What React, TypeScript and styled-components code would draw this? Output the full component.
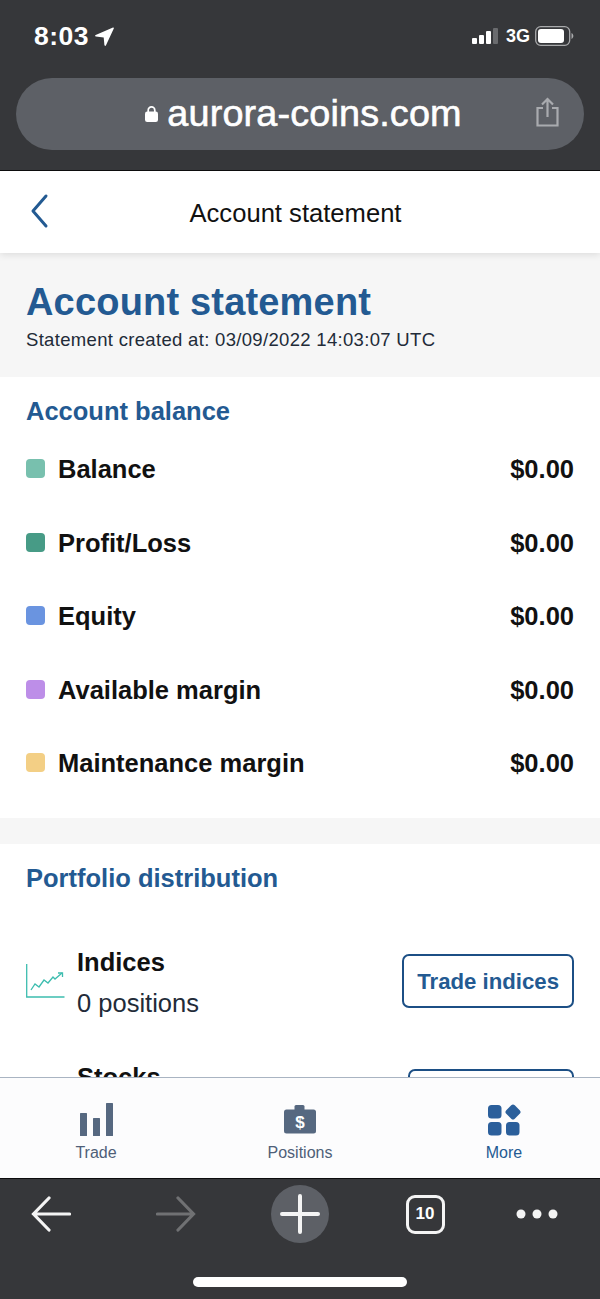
import React from "react";
import styled, { createGlobalStyle } from "styled-components";

const GlobalStyle = createGlobalStyle`
  html, body {
    margin: 0;
    padding: 0;
    background: #36373a;
  }
  * {
    box-sizing: border-box;
  }
`;

const Screen = styled.div`
  width: 600px;
  height: 1299px;
  display: flex;
  flex-direction: column;
  overflow: hidden;
  font-family: "Liberation Sans", Arial, sans-serif;
  background: #fff;
`;

const BrowserTop = styled.header`
  height: 171px;
  flex: none;
  background: #36373a;
  border-bottom: 1px solid #0c0c0d;
  padding: 22px 16px 0;
  color: #fff;
`;

const StatusBar = styled.div`
  height: 28px;
  display: flex;
  align-items: center;
  justify-content: space-between;
  padding: 0 9px 0 18px;
  margin-bottom: 28px;
`;

const StatusGroup = styled.div<{ $gap: number }>`
  display: flex;
  align-items: center;
  gap: ${(p) => p.$gap}px;
`;

const Clock = styled.span`
  font-size: 26.5px;
  font-weight: 700;
  letter-spacing: 0.5px;
`;

const Network = styled.span`
  font-size: 18px;
  font-weight: 700;
  margin: 0 -1px 0 1px;
`;

const UrlBar = styled.div`
  height: 72px;
  border-radius: 36px;
  background: #5d6066;
  display: flex;
  align-items: center;
  justify-content: center;
  position: relative;
  gap: 9px;
  padding-left: 7px;
`;

const UrlText = styled.span`
  font-size: 37.8px;
  line-height: 1;
  color: #fff;
  letter-spacing: 0.15px;
  -webkit-text-stroke: 0.6px #fff;
`;

const ShareButton = styled.span`
  position: absolute;
  right: 25px;
  top: 19px;
  display: flex;
`;

const Content = styled.main`
  flex: 1;
  min-height: 0;
  overflow: hidden;
  display: flex;
  flex-direction: column;
  background: #f6f6f6;
`;

const NavBar = styled.div`
  height: 82px;
  flex: none;
  display: flex;
  align-items: center;
  justify-content: center;
  position: relative;
  background: #fff;
  box-shadow: 0 2px 7px rgba(0, 0, 0, 0.1);
  font-size: 25.6px;
  color: #111;
`;

const NavTitle = styled.span`
  margin: 2px 0 0 -9px;
`;

const BackButton = styled.span`
  position: absolute;
  left: 29px;
  top: 22px;
  display: flex;
`;

const Hero = styled.section`
  height: 124px;
  flex: none;
  padding: 27px 26px 0;
`;

const Heading = styled.h1`
  margin: 0;
  font-size: 38px;
  line-height: 44px;
  font-weight: 700;
  letter-spacing: 0.18px;
  color: #235a92;
`;

const Created = styled.p`
  margin: 5px 0 0;
  font-size: 18.5px;
  line-height: 22px;
  color: #222b38;
  letter-spacing: 0.32px;
`;

const Panel = styled.section<{ $height: number }>`
  height: ${(p) => p.$height}px;
  flex: none;
  padding: 19px 26px 0;
  background: #fff;
`;

const PanelTitle = styled.h2`
  margin: 0;
  font-size: 25.5px;
  line-height: 30px;
  font-weight: 700;
  color: #235a92;
`;

const Gap = styled.div`
  height: 26px;
  flex: none;
`;

const BalanceList = styled.div`
  margin-top: 7px;
  display: flex;
  flex-direction: column;
`;

const BalanceRow = styled.div`
  height: 73.5px;
  display: flex;
  align-items: center;
  font-size: 25.5px;
  font-weight: 700;
  color: #111;
`;

const Swatch = styled.span<{ $color: string }>`
  width: 19px;
  height: 19px;
  border-radius: 4px;
  background: ${(p) => p.$color};
  margin: -2px 13px 0 0;
  flex: none;
`;

const Amount = styled.span`
  margin-left: auto;
`;

const MarketList = styled.div`
  margin-top: 30px;
  display: flex;
  flex-direction: column;
`;

const Market = styled.div`
  display: flex;
  align-items: center;
  justify-content: space-between;
  height: 115px;
`;

const MarketIcon = styled.span`
  width: 51px;
  flex: none;
  display: flex;
`;

const MarketText = styled.div`
  flex: 1;
  padding-top: 4px;
`;

const MarketName = styled.div`
  font-size: 25.5px;
  line-height: 30px;
  font-weight: 700;
  color: #111;
`;

const MarketCount = styled.div`
  margin-top: 11px;
  font-size: 25.5px;
  line-height: 30px;
  color: #222b38;
`;

const TradeButton = styled.button`
  height: 54px;
  border: 2px solid #1c4f85;
  border-radius: 7px;
  background: #fff;
  color: #235a92;
  font-family: inherit;
  font-size: 22.2px;
  font-weight: 700;
  padding: 3px 13px 0;
`;

const TabBar = styled.nav`
  height: 102px;
  flex: none;
  display: grid;
  grid-template-columns: 192px 216px 192px;
  background: #fcfcfd;
  border-top: 1px solid #a9b4c2;
  border-bottom: 1px solid #0c0c0d;
  padding-top: 25px;
`;

const Tab = styled.div<{ $active?: boolean }>`
  display: flex;
  flex-direction: column;
  align-items: center;
  font-size: 16px;
  color: ${(p) => (p.$active ? "#235a92" : "#4f5f78")};
`;

const TabIcon = styled.span`
  height: 33px;
  display: flex;
  align-items: flex-end;
  margin-bottom: 8px;
`;

const BrowserBottom = styled.footer`
  flex: none;
  height: 120px;
  background: #36373a;
  display: flex;
  flex-direction: column;
  align-items: center;
`;

const BrowserActions = styled.div`
  width: 100%;
  height: 98px;
  display: grid;
  grid-template-columns: 125px 124px 125px 112px 58px;
  padding: 6px 0 0 22px;
`;

const BrowserAction = styled.span`
  width: 58px;
  height: 58px;
  display: flex;
  align-items: center;
  justify-content: center;
`;

const NewTab = styled(BrowserAction)`
  border-radius: 50%;
  background: #5d6066;
`;

const TabCount = styled.span`
  width: 39px;
  height: 39px;
  border: 3.5px solid #f4f4f4;
  border-radius: 9px;
  display: flex;
  align-items: center;
  justify-content: center;
  color: #fff;
  font-size: 17px;
  font-weight: 700;
`;

const HomeBar = styled.span`
  width: 214px;
  height: 10px;
  border-radius: 5px;
  background: #fff;
`;

const balances = [
  { label: "Balance", color: "#78c0ae" },
  { label: "Profit/Loss", color: "#479b86" },
  { label: "Equity", color: "#6a94e0" },
  { label: "Available margin", color: "#bd8ee8" },
  { label: "Maintenance margin", color: "#f3cf85" },
];

const markets = [
  { name: "Indices", action: "Trade indices" },
  { name: "Stocks", action: "Trade stocks" },
];

function ChartIcon() {
  return (
    <svg width="39" height="34" viewBox="0 0 39 34" fill="none" stroke="#3dbdaf" strokeWidth="1.3">
      <path d="M0.7 0V33H38.5" />
      <path d="M5 26L9 20L13 23L18 16L22 19L27 13L29 15L36 9" />
      <path d="M32 9H36.5V13" />
    </svg>
  );
}

export default function App() {
  return (
    <Screen>
      <GlobalStyle />
      <BrowserTop>
        <StatusBar>
          <StatusGroup $gap={6}>
            <Clock>8:03</Clock>
            <svg width="19" height="19" viewBox="0 0 19 19" fill="#fff">
              <path d="M18 0.5C18.7 0.3 19 0.8 18.8 1.5L11 18.3C10.6 19.2 9.5 19 9.4 18.1L8.7 10.4L0.9 9.6C0 9.5 -0.2 8.4 0.7 8Z" />
            </svg>
          </StatusGroup>
          <StatusGroup $gap={6}>
            <svg width="27" height="16" viewBox="0 0 27 16">
              <rect x="0" y="10" width="5" height="6" rx="1" fill="#fff" />
              <rect x="7" y="7" width="5" height="9" rx="1" fill="#fff" />
              <rect x="14" y="3" width="5" height="13" rx="1" fill="#fff" />
              <rect x="21" y="0" width="5" height="16" rx="1" fill="#6a6b6e" />
            </svg>
            <Network>3G</Network>
            <svg width="40" height="20" viewBox="0 0 40 20" fill="none">
              <rect x="0.7" y="0.7" width="34" height="18.6" rx="5" stroke="#a9aaac" strokeWidth="1.3" />
              <rect x="3" y="3" width="26" height="14" rx="3" fill="#fff" />
              <path d="M36.5 7v6c1-.4 1.8-1.6 1.8-3s-.8-2.6-1.8-3z" fill="#a9aaac" />
            </svg>
          </StatusGroup>
        </StatusBar>
        <UrlBar>
          <svg width="13" height="16" viewBox="0 0 13 16" fill="#fff">
            <rect x="0" y="5.5" width="13" height="10.5" rx="2.2" />
            <path d="M3.2 7V4.2a3.3 3.3 0 0 1 6.6 0V7" fill="none" stroke="#fff" strokeWidth="1.7" />
          </svg>
          <UrlText>aurora-coins.com</UrlText>
          <ShareButton>
            <svg width="23" height="30" viewBox="0 0 23 30" fill="none" stroke="#a9abaf" strokeWidth="2.2">
              <path d="M7 11H1.5V28.5H21.5V11H16" />
              <path d="M11.5 20V2M6 7.5L11.5 2L17 7.5" />
            </svg>
          </ShareButton>
        </UrlBar>
      </BrowserTop>

      <Content>
        <NavBar>
          <BackButton>
            <svg width="20" height="36" viewBox="0 0 20 36" fill="none" stroke="#235a92" strokeWidth="3" strokeLinecap="round" strokeLinejoin="round">
              <path d="M17 3L4 18L17 33" />
            </svg>
          </BackButton>
          <NavTitle>Account statement</NavTitle>
        </NavBar>

        <Hero>
          <Heading>Account statement</Heading>
          <Created>Statement created at: 03/09/2022 14:03:07 UTC</Created>
        </Hero>

        <Panel $height={441}>
          <PanelTitle>Account balance</PanelTitle>
          <BalanceList>
            {balances.map((b) => (
              <BalanceRow key={b.label}>
                <Swatch $color={b.color} />
                {b.label}
                <Amount>$0.00</Amount>
              </BalanceRow>
            ))}
          </BalanceList>
        </Panel>

        <Gap />

        <Panel $height={300}>
          <PanelTitle>Portfolio distribution</PanelTitle>
          <MarketList>
            {markets.map((m) => (
              <Market key={m.name}>
                <MarketIcon>
                  <ChartIcon />
                </MarketIcon>
                <MarketText>
                  <MarketName>{m.name}</MarketName>
                  <MarketCount>0 positions</MarketCount>
                </MarketText>
                <TradeButton>{m.action}</TradeButton>
              </Market>
            ))}
          </MarketList>
        </Panel>
      </Content>

      <TabBar>
        <Tab>
          <TabIcon>
            <svg width="33" height="33" viewBox="0 0 33 33" fill="#566880">
              <rect x="0" y="10" width="7" height="23" rx="0.5" />
              <rect x="13" y="15" width="7" height="18" rx="0.5" />
              <rect x="26" y="0" width="7" height="33" rx="0.5" />
            </svg>
          </TabIcon>
          Trade
        </Tab>
        <Tab>
          <TabIcon>
            <svg width="32" height="31" viewBox="0 0 32 31">
              <rect x="10.5" y="0" width="10" height="6" rx="1.5" fill="#566880" />
              <rect x="0" y="4.5" width="32" height="24" rx="2.5" fill="#566880" />
              <text x="16" y="23" textAnchor="middle" fontFamily="Liberation Sans" fontSize="17" fontWeight="700" fill="#fff">$</text>
            </svg>
          </TabIcon>
          Positions
        </Tab>
        <Tab $active>
          <TabIcon>
            <svg width="33" height="32" viewBox="0 0 33 32" fill="#2b5f9b">
              <rect x="0" y="1" width="13.5" height="13.5" rx="3.5" />
              <rect x="19" y="2" width="12" height="12" rx="2.5" transform="rotate(45 25 8)" />
              <rect x="0" y="18" width="13.5" height="13.5" rx="3.5" />
              <rect x="18" y="18" width="13.5" height="13.5" rx="3.5" />
            </svg>
          </TabIcon>
          More
        </Tab>
      </TabBar>

      <BrowserBottom>
        <BrowserActions>
          <BrowserAction>
            <svg width="40" height="36" viewBox="0 0 40 36" fill="none" stroke="#f4f4f4" strokeWidth="3.2" strokeLinecap="round">
              <path d="M38.5 18H2.5M18 2L2.5 18L18 34" />
            </svg>
          </BrowserAction>
          <BrowserAction>
            <svg width="40" height="36" viewBox="0 0 40 36" fill="none" stroke="#707173" strokeWidth="3.2" strokeLinecap="round">
              <path d="M1.5 18H37.5M22 2L37.5 18L22 34" />
            </svg>
          </BrowserAction>
          <NewTab>
            <svg width="40" height="40" viewBox="0 0 40 40" fill="none" stroke="#f4f4f4" strokeWidth="4" strokeLinecap="round">
              <path d="M20 2V38M2 20H38" />
            </svg>
          </NewTab>
          <BrowserAction>
            <TabCount>10</TabCount>
          </BrowserAction>
          <BrowserAction>
            <svg width="42" height="10" viewBox="0 0 42 10" fill="#f4f4f4">
              <circle cx="5" cy="5" r="4.5" />
              <circle cx="21" cy="5" r="4.5" />
              <circle cx="37" cy="5" r="4.5" />
            </svg>
          </BrowserAction>
        </BrowserActions>
        <HomeBar />
      </BrowserBottom>
    </Screen>
  );
}
